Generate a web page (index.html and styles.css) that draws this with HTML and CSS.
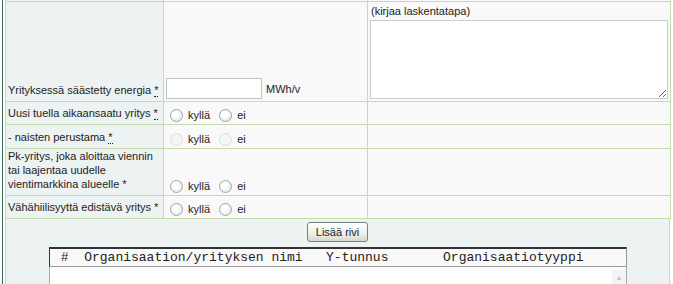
FILE: index.html
```
<!DOCTYPE html>
<html lang="fi">
<head>
    <meta charset="UTF-8">
    <title>Hankkeen tulokset</title>
    <link rel="stylesheet" href="styles.css">
</head>
<body>
    <div class="frame">
        <table class="form">
            <colgroup>
                <col class="col-label">
                <col class="col-input">
                <col class="col-extra">
            </colgroup>
            <tr class="prev-row">
                <td class="label"></td>
                <td></td>
                <td></td>
            </tr>
            <tr class="energy-row">
                <td class="label">Yrityksessä säästetty energia <abbr title="pakollinen">*</abbr></td>
                <td class="bottom">
                    <input type="text" class="small-input"> <span class="unit">MWh/v</span>
                </td>
                <td class="top">
                    <div class="hint">(kirjaa laskentatapa)</div>
                    <textarea class="method"></textarea>
                </td>
            </tr>
            <tr class="radio-row">
                <td class="label">Uusi tuella aikaansaatu yritys <abbr title="pakollinen">*</abbr></td>
                <td class="bottom">
                    <label><input type="radio" name="uusi"> kyllä</label>
                    <label><input type="radio" name="uusi"> ei</label>
                </td>
                <td></td>
            </tr>
            <tr class="radio-row tall">
                <td class="label">- naisten perustama <abbr title="pakollinen">*</abbr></td>
                <td class="bottom">
                    <label><input type="radio" name="naiset" disabled> kyllä</label>
                    <label><input type="radio" name="naiset" disabled> ei</label>
                </td>
                <td></td>
            </tr>
            <tr class="radio-row">
                <td class="label">Pk-yritys, joka aloittaa viennin tai laajentaa uudelle vientimarkkina alueelle *</td>
                <td class="bottom">
                    <label><input type="radio" name="vienti"> kyllä</label>
                    <label><input type="radio" name="vienti"> ei</label>
                </td>
                <td></td>
            </tr>
            <tr class="radio-row">
                <td class="label">Vähähiilisyyttä edistävä yritys *</td>
                <td class="bottom">
                    <label><input type="radio" name="hiili"> kyllä</label>
                    <label><input type="radio" name="hiili"> ei</label>
                </td>
                <td></td>
            </tr>
        </table>

        <div class="orgs">
            <div class="add-bar">
                <button type="button" class="add-btn">Lisää rivi</button>
            </div>
            <div class="org-list">
                <div class="org-head"> #  Organisaation/yrityksen nimi   Y-tunnus       Organisaatiotyyppi</div>
                <div class="org-body">
                    <div class="scroll-up">&#9650;</div>
                </div>
            </div>
        </div>
    </div>
</body>
</html>
```

FILE: styles.css
```
* {
    box-sizing: border-box;
}

body {
    margin: 0;
    background-color: #fff;
    color: #222;
    font-family: 'Liberation Sans', Arial, sans-serif;
    font-size: 11px;
    overflow: hidden;
}

.frame {
    margin: -19px 0 0 2px;
    padding-left: 2px;
    border-left: 1px solid #2d6a52;
    width: 668px;
}

.form {
    border-collapse: collapse;
    table-layout: fixed;
    width: 665px;
}

.col-label { width: 158px; }
.col-input { width: 204px; }
.col-extra { width: 303px; }

.form td {
    border: 1px solid #c4dcae;
    background-color: #f9f9fa;
    padding: 0 2px 2px;
    line-height: 14px;
    vertical-align: bottom;
}

.form td.label {
    background-color: #edf3f2;
    padding: 0 2px 4px;
}

.form td.top {
    vertical-align: top;
    padding-top: 2px;
}

.prev-row td {
    height: 20px;
}

.energy-row td {
    height: 98px;
}

.radio-row td {
    height: 23px;
}

.radio-row.tall td {
    height: 24px;
}

abbr {
    text-decoration: none;
    border-bottom: 1px dotted #222;
}

.small-input {
    width: 96px;
    height: 21px;
    margin: 0;
    border: 1px solid #bcc3c8;
    background-color: #fff;
    vertical-align: bottom;
}

.unit {
    margin-left: 1px;
    line-height: 20px;
}

.hint {
    padding-left: 1px;
}

.method {
    display: block;
    width: 298px;
    height: 79px;
    margin: 2px 0 0;
    border: 1px solid #c8cdd0;
    background-color: #fff;
    resize: vertical;
}

label {
    margin-right: 2px;
}

input[type="radio"] {
    appearance: none;
    -webkit-appearance: none;
    width: 13px;
    height: 13px;
    margin: 3px 2px 0 4px;
    border: 1px solid #9ea6ad;
    border-radius: 50%;
    background: radial-gradient(circle at 40% 40%, #ffffff 30%, #d9dcdf 100%);
    vertical-align: -3px;
}

input[type="radio"]:disabled {
    border-color: #dadfdc;
    background: #f4f5f5;
}

.orgs {
    width: 665px;
    background-color: #edf3f2;
    border-left: 1px solid #c4dcae;
    border-right: 1px solid #c4dcae;
    padding-top: 3px;
}

.add-bar {
    text-align: center;
    height: 22px;
}

.add-btn {
    height: 20px;
    padding: 0 8px;
    font-family: 'Liberation Sans', Arial, sans-serif;
    font-size: 11px;
    color: #222;
    border: 1px solid #7b7f83;
    border-radius: 3px;
    background: linear-gradient(#ffffff, #ebebe6 70%, #d6d6d0);
}

.org-list {
    margin: 3px 0 0 43px;
    width: 578px;
}

.org-head {
    height: 20px;
    border-top: 2px solid #333;
    border-left: 1px solid #333;
    border-right: 1px solid #999;
    border-bottom: 1px solid #999;
    background-color: #f9f9f9;
    font-family: 'Courier New', 'Liberation Mono', monospace;
    font-size: 13px;
    line-height: 17px;
    white-space: pre;
    padding-left: 3px;
}

.org-body {
    height: 60px;
    background-color: #fff;
    border-left: 1px solid #a8a8a8;
    border-right: 1px solid #a8a8a8;
    display: flex;
    justify-content: flex-end;
    padding-top: 3px;
}

.scroll-up {
    width: 14px;
    height: 15px;
    font-size: 7px;
    line-height: 15px;
    text-align: center;
    color: #b8c4cc;
    background-color: #f3f4f5;
}
```
